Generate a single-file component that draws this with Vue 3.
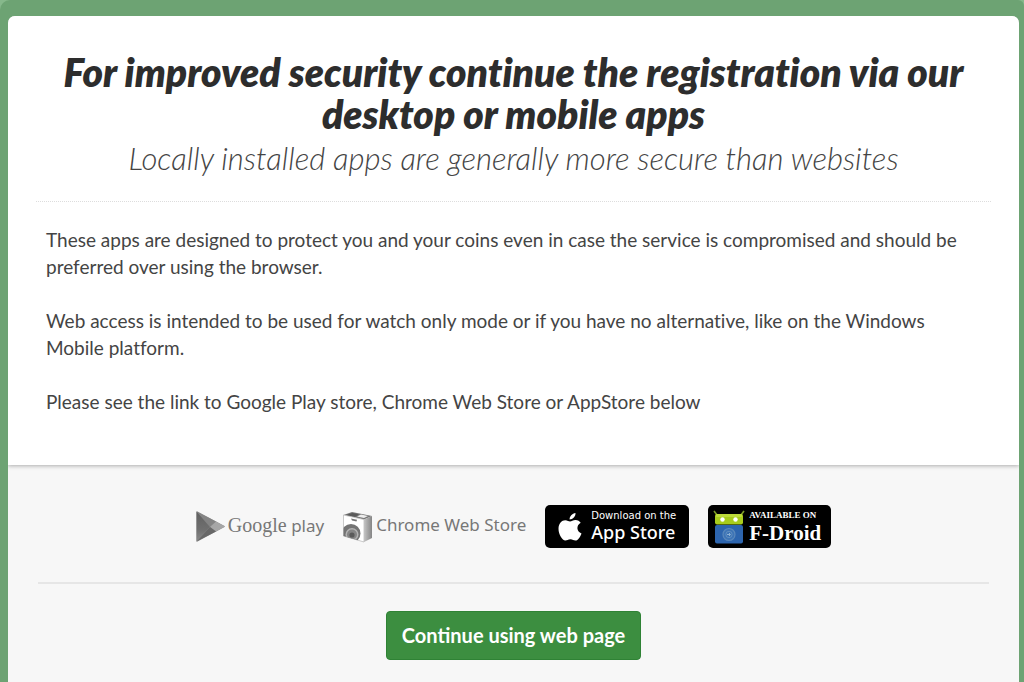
<script setup>
const stores = {
  play: 'https://play.google.com/store',
  chrome: 'https://chrome.google.com/webstore',
  apple: 'https://www.apple.com/app-store/',
  fdroid: 'https://f-droid.org/',
}
</script>

<template>
  <div class="backdrop">
    <main class="dialog">
      <section class="intro">
        <header class="heading">
          <h1>For improved security continue the registration via our desktop or mobile apps</h1>
          <p class="subtitle">Locally installed apps are generally more secure than websites</p>
        </header>
        <div class="copy">
          <p>These apps are designed to protect you and your coins even in case the service is compromised and should be preferred over using the browser.</p>
          <p>Web access is intended to be used for watch only mode or if you have no alternative, like on the Windows Mobile platform.</p>
          <p>Please see the link to Google Play store, Chrome Web Store or AppStore below</p>
        </div>
      </section>

      <section class="actions">
        <nav class="stores" aria-label="App stores">
          <a class="plain play" :href="stores.play">
            <svg width="29" height="31" viewBox="0 0 29 31" aria-hidden="true">
              <defs>
                <linearGradient id="playBody" x1="0" y1="0" x2="0" y2="1">
                  <stop offset="0" stop-color="#606060" />
                  <stop offset="0.6" stop-color="#6f6f6f" />
                  <stop offset="1" stop-color="#8a8a8a" />
                </linearGradient>
              </defs>
              <path d="M0.5 1 Q0.5 0 1.5 0.5 L28.5 15 Q29 15.5 28.5 16 L1.5 30.5 Q0.5 31 0.5 30 Z" fill="#8c8c8c" />
              <path d="M0.5 0.5 L20 10.5 L14 16 Z" fill="#848484" />
              <path d="M20 10.5 L29 15.5 L20 20.5 L14 16 Z" fill="#a6a6a6" />
              <path d="M0.5 30.5 L14 16 L20 20.5 Z" fill="#686868" />
              <path d="M0.5 0.5 L14 16 L0.5 30.5 Z" fill="url(#playBody)" />
            </svg>
            <span class="label"><span class="google">Google</span> play</span>
          </a>

          <a class="plain chrome" :href="stores.chrome">
            <svg width="30" height="32" viewBox="0 0 30 32" aria-hidden="true">
              <defs>
                <linearGradient id="bagSide" x1="0" y1="0" x2="1" y2="0">
                  <stop offset="0" stop-color="#c4c4c4" />
                  <stop offset="1" stop-color="#858585" />
                </linearGradient>
                <clipPath id="bagFace">
                  <path d="M0.5 4 L21 8.5 V31 L0.5 25 Z" />
                </clipPath>
              </defs>
              <path d="M0.5 4 L9 1 L29 5 L21 8.5 Z" fill="#777" />
              <path d="M3 4 L9.5 2 L16 3.3 L12 6 Z" fill="#5a5a5a" />
              <path d="M14 5.5 L18 3.5 L25 5 L21 7 Z" fill="#ededed" />
              <path d="M0.5 4 L21 8.5 V31 L0.5 25 Z" fill="#fff" stroke="#b5b5b5" stroke-width="0.7" />
              <path d="M21 8.5 L29 5 V27 L21 31 Z" fill="url(#bagSide)" />
              <path d="M8 7.5 L14 8.8 L13.5 10.5 L9 9.5 Z" fill="#777" />
              <g clip-path="url(#bagFace)">
                <circle cx="8" cy="22.5" r="9.5" fill="#747474" />
                <circle cx="9" cy="23.5" r="6.5" fill="#b3b3b3" />
                <circle cx="9" cy="23.5" r="5" fill="#858585" />
                <circle cx="9" cy="24" r="2.6" fill="#5a5a5a" />
              </g>
            </svg>
            <span class="label">Chrome Web Store</span>
          </a>

          <a class="badge apple" :href="stores.apple">
            <svg width="24" height="28" viewBox="0 0 24 28" aria-hidden="true">
              <path d="M17.5 0 C17.7 3.5 14.8 6.5 11.6 6.5 C11.3 3.4 14.3 0.4 17.5 0 Z" fill="#fff" />
              <path d="M12 8.5 C13.5 8.5 15 7 17.5 7 C19.8 7 21.7 8.2 22.7 9.7 C17.8 12.5 18.7 18.6 23.5 20.4 C22.3 23.6 20 27.5 17.5 27.5 C15.5 27.5 14.8 26.2 12.4 26.2 C10 26.2 9.2 27.5 7.3 27.5 C4.4 27.5 0.5 21.7 0.5 15.8 C0.5 10.2 3.8 7.2 7.2 7.2 C9.5 7.2 10.8 8.5 12 8.5 Z" fill="#fff" />
            </svg>
            <span class="lines">
              <span class="small">Download on the</span>
              <span class="big">App Store</span>
            </span>
          </a>

          <a class="badge fdroid" :href="stores.fdroid">
            <svg width="32" height="34" viewBox="0 0 32 34" aria-hidden="true">
              <path d="M1 1 L4 5 M31 1 L28 5" stroke="#7d9c25" stroke-width="1.6" />
              <rect x="2" y="4" width="28" height="10.5" rx="2" fill="#a8cc1c" />
              <rect x="3" y="4" width="26" height="3" rx="1" fill="#bddb3a" />
              <circle cx="9.5" cy="9.5" r="2.2" fill="#fff" />
              <circle cx="22.5" cy="9.5" r="2.2" fill="#fff" />
              <rect x="2" y="15" width="28" height="18.5" rx="2" fill="#2d65ae" />
              <circle cx="16" cy="24.5" r="6" fill="#3d74b6" stroke="#5a88bb" stroke-width="1.2" />
              <circle cx="16" cy="24.5" r="3.2" fill="none" stroke="#5f8dbf" />
              <path d="M14 24.5 H17 M16 23 L17.5 24.5 L16 26" fill="none" stroke="#8bb0d4" />
            </svg>
            <span class="lines">
              <span class="small">AVAILABLE ON</span>
              <span class="big">F-Droid</span>
            </span>
          </a>
        </nav>
        <div class="proceed">
          <button type="button">Continue using web page</button>
        </div>
      </section>
    </main>
  </div>
</template>

<style>
body {
  margin: 0;
  background: #86b88b;
}
</style>

<style scoped>
.backdrop {
  box-sizing: border-box;
  min-height: 100vh;
  padding: 16px 5px 0 8px;
  display: flex;
  border-radius: 10px 6px 0 0;
  background: #6da373;
  font-family: Lato, "Liberation Sans", sans-serif;
  font-variant-ligatures: none;
  color: #444;
}

.dialog {
  flex: 1;
  display: flex;
  flex-direction: column;
  overflow: hidden;
  border-radius: 7px 7px 0 0;
  background: #f7f7f7;
}

.intro {
  position: relative;
  padding: 35px 28px 50px;
  background: #fff;
  box-shadow: 0 1px 4px rgba(0, 0, 0, 0.3);
}

.heading {
  padding: 0 16px 22px;
  border-bottom: 1px dotted #ddd;
  text-align: center;
}

h1 {
  margin: 0;
  font-size: 39px;
  line-height: 42px;
  font-weight: 800;
  font-style: italic;
  color: #2d2d2d;
}

.subtitle {
  margin: 0;
  padding-top: 2px;
  font-size: 31px;
  line-height: 42px;
  font-weight: 300;
  font-style: italic;
  color: #444;
}

.copy {
  display: flex;
  flex-direction: column;
  gap: 27px;
  padding: 24px 10px 0;
}

.copy p {
  margin: 0;
  font-size: 19px;
  line-height: 27px;
}

.actions {
  flex: 1;
  padding: 40px 30px 22px;
}

.stores {
  display: flex;
  flex-wrap: wrap;
  justify-content: center;
  align-items: center;
  gap: 19px;
  padding-bottom: 34px;
  border-bottom: 2px solid #e6e6e6;
}

.stores a {
  display: flex;
  align-items: center;
  text-decoration: none;
  white-space: nowrap;
}

.stores svg {
  flex: none;
}

.plain {
  gap: 3px;
  color: #777;
}

.label {
  padding-bottom: 3px;
  font-family: "Noto Sans", sans-serif;
  font-size: 17px;
  line-height: 24px;
}

.google {
  font-family: "Liberation Serif", serif;
  font-size: 20px;
}

.badge {
  box-sizing: border-box;
  height: 43px;
  border-radius: 5px;
  background: #000;
  color: #fff;
}

.lines {
  display: flex;
  flex-direction: column;
}

.apple {
  gap: 9px;
  padding: 0 13px;
}

.apple .lines {
  font-family: "Noto Sans", sans-serif;
}

.apple .small {
  font-family: "DejaVu Sans", sans-serif;
  font-size: 10px;
  line-height: 10px;
}

.apple .big {
  font-size: 18px;
  line-height: 22px;
  font-weight: 500;
}

.fdroid {
  gap: 4px;
  padding: 0 10px 0 5px;
}

.fdroid .lines {
  font-family: "Liberation Serif", serif;
  font-weight: 700;
}

.fdroid .small {
  font-size: 9px;
  line-height: 12px;
}

.fdroid .big {
  font-size: 21px;
  line-height: 24px;
}

.proceed {
  display: flex;
  justify-content: center;
  padding-top: 27px;
}

button {
  padding: 0 15px;
  border: 1px solid #2f8235;
  border-radius: 4px;
  background: #3c8e40;
  font-family: inherit;
  font-size: 20px;
  line-height: 47px;
  font-weight: 700;
  color: #fff;
  cursor: pointer;
}
</style>
